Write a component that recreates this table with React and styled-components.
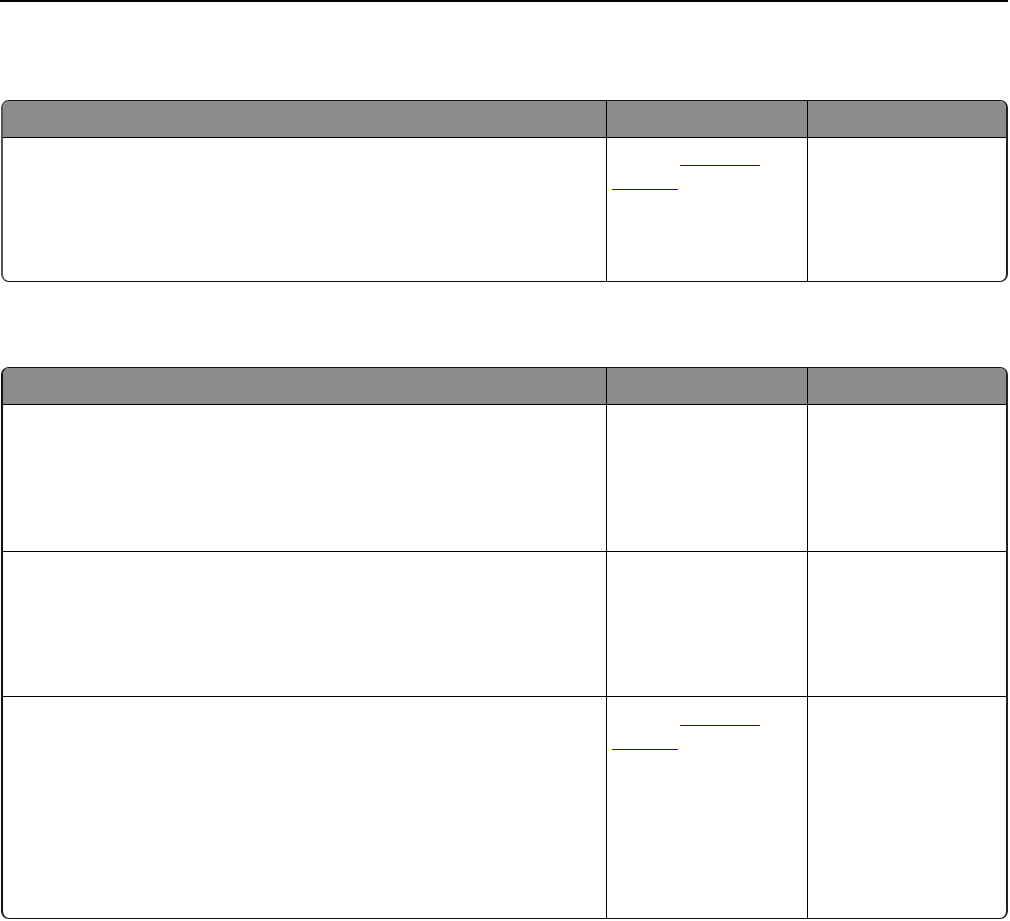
import React from "react";
import styled, { createGlobalStyle } from "styled-components";

const GlobalStyle = createGlobalStyle`
  html, body {
    margin: 0;
    padding: 0;
    background: #ffffff;
    font-family: "Liberation Sans", Arial, sans-serif;
  }
`;

const COLS = "603px 201px 1fr";

const tables = [
  {
    edge: "#555",
    rows: [{ height: 143, link: true, top: 4 }],
  },
  {
    edge: "#111",
    rows: [
      { height: 146 },
      { height: 144 },
      { height: 221, link: true, top: 5 },
    ],
  },
];

const App = () => {
  return (
    <React.Fragment>
      <GlobalStyle />
      <Page>
        <TopRule />
        {tables.map((table, ti) => (
          <Table key={ti} first={ti === 0} edge={table.edge}>
            <HeaderRow>
              <HeaderCell />
              <HeaderCell divider />
              <HeaderCell divider />
            </HeaderRow>
            {table.rows.map((row, ri) => (
              <BodyRow key={ri} height={row.height} last={ri === table.rows.length - 1}>
                <Cell />
                <Cell divider>
                  {row.link && (
                    <LinkBlock top={row.top}>
                      <LinkLine>
                        <Underline indent={73} width={80} />
                      </LinkLine>
                      <LinkLine>
                        <Underline indent={5} width={66} />
                      </LinkLine>
                    </LinkBlock>
                  )}
                </Cell>
                <Cell divider />
              </BodyRow>
            ))}
          </Table>
        ))}
      </Page>
    </React.Fragment>
  );
};

const Page = styled.div`
  width: 1010px;
  min-height: 921px;
  box-sizing: border-box;
  padding-left: 1px;
`;

const TopRule = styled.div`
  width: 1008px;
  height: 2px;
  margin-left: -1px;
  background: #000;
`;

const Table = styled.div`
  width: 1007px;
  box-sizing: border-box;
  margin-top: ${(props) => (props.first ? "98px" : "85px")};
  border: 1px solid #111;
  border-left: 2px solid ${(props) => props.edge};
  border-right: 2px solid #222;
  border-radius: 8px;
  overflow: hidden;
`;

const HeaderRow = styled.div`
  display: grid;
  grid-template-columns: ${COLS};
  height: 36px;
  background: #8c8c8c;
  border-bottom: 1px solid #000;
`;

const HeaderCell = styled.div`
  border-left: ${(props) => (props.divider ? "1px solid #000" : "none")};
`;

const BodyRow = styled.div`
  display: grid;
  grid-template-columns: ${COLS};
  height: ${(props) => props.height}px;
  border-bottom: ${(props) => (props.last ? "none" : "1px solid #000")};
`;

const Cell = styled.div`
  border-left: ${(props) => (props.divider ? "1px solid #000" : "none")};
`;

const LinkBlock = styled.div`
  padding-top: ${(props) => props.top}px;
`;

const LinkLine = styled.div`
  height: 24px;
  display: flex;
  align-items: flex-end;
`;

const Underline = styled.span`
  display: block;
  margin-left: ${(props) => props.indent}px;
  width: ${(props) => props.width}px;
  border-bottom: 1px solid #1414b4;
`;

export default App;
